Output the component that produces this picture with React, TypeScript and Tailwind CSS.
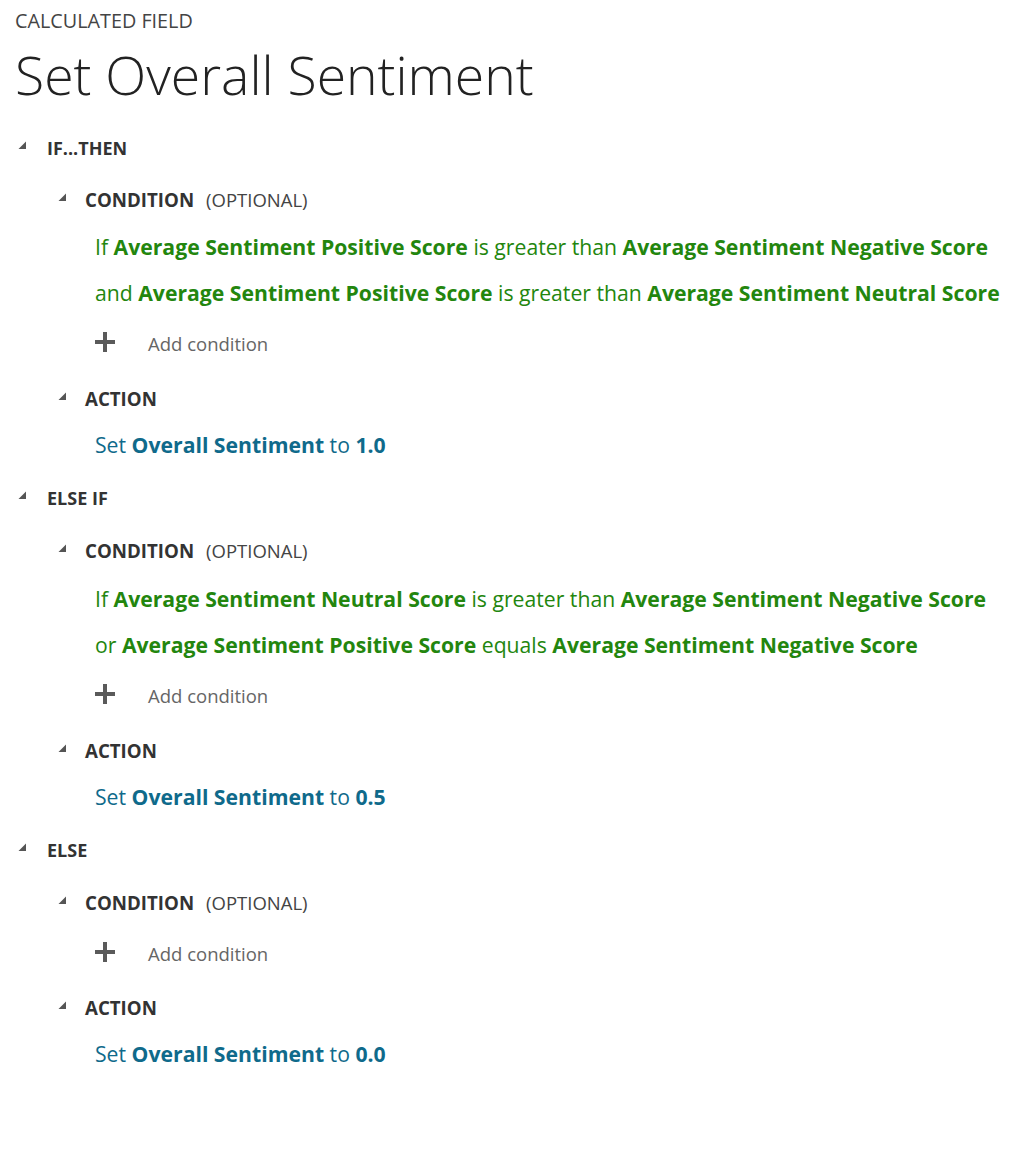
import React from "react";

const Tri = () => (
  <svg width="9" height="9" viewBox="0 0 9 9" className="shrink-0">
    <polygon points="8,0.5 8,8 0.5,8" fill="#555" />
  </svg>
);

const Plus = () => (
  <svg width="20" height="20" viewBox="0 0 20 20" className="shrink-0">
    <rect x="8" y="0" width="4" height="20" fill="#5a5a5a" />
    <rect x="0" y="8" width="20" height="4" fill="#5a5a5a" />
  </svg>
);

const G = ({ children }: { children: React.ReactNode }) => (
  <span className="font-bold">{children}</span>
);

const Header = ({ label, className = "" }: { label: string; className?: string }) => (
  <div className={`flex h-[46px] items-center ${className}`}>
    <div className="w-[47px] pl-[18px] -mt-[6px]">
      <Tri />
    </div>
    <span className="text-[18px] font-bold text-[#333]">{label}</span>
  </div>
);

const SubHeader = ({ label, optional, className = "" }: { label: string; optional?: boolean; className?: string }) => (
  <div className={`flex h-[46px] items-center pl-[40px] ${className}`}>
    <div className="w-[45px] pl-[18px] -mt-[6px]">
      <Tri />
    </div>
    <span className="text-[18.7px] font-bold text-[#333]">{label}</span>
    {optional && <span className="ml-[12px] text-[18.5px] text-[#444]">(OPTIONAL)</span>}
  </div>
);

const CondLine = ({ children, className = "" }: { children: React.ReactNode; className?: string }) => (
  <div className={`flex h-[46px] items-center pl-[95px] text-[21.2px] text-[#23860e] whitespace-nowrap ${className}`}>
    <span>{children}</span>
  </div>
);

const AddCond = ({ className = "" }: { className?: string }) => (
  <div className={`flex h-[46px] items-center pl-[95px] ${className}`}>
    <div className="-mt-[4px]">
      <Plus />
    </div>
    <span className="ml-[33px] text-[18.5px] text-[#666]">Add condition</span>
  </div>
);

const SetLine = ({ value, className = "" }: { value: string; className?: string }) => (
  <div className={`flex h-[46px] items-center pl-[95px] text-[21.2px] text-[#0f6a8b] whitespace-nowrap ${className}`}>
    <span>
      Set <G>Overall Sentiment</G> to <G>{value}</G>
    </span>
  </div>
);

export default function App() {
  return (
    <div
      className="w-[1032px] h-[1162px] bg-white overflow-hidden"
      style={{ fontFamily: '"Open Sans", "Noto Sans", sans-serif' }}
    >
      <div className="flex h-[40px] items-center pl-[15px] pt-[2px] text-[19.8px] text-[#444]">CALCULATED FIELD</div>
      <div className="flex h-[70px] items-center pl-[15px] text-[53.5px] font-light text-[#222] leading-none">
        Set Overall Sentiment
      </div>

      <Header label="IF...THEN" className="mt-[15px]" />
      <SubHeader label="CONDITION" optional className="mt-[6px]" />
      <CondLine className="mt-[1px]">
        If <G>Average Sentiment Positive Score</G> is greater than <G>Average Sentiment Negative Score</G>
      </CondLine>
      <CondLine>
        and <G>Average Sentiment Positive Score</G> is greater than <G>Average Sentiment Neutral Score</G>
      </CondLine>
      <AddCond className="mt-[5px]" />
      <SubHeader label="ACTION" className="mt-[9px]" />
      <SetLine value="1.0" />

      <Header label="ELSE IF" className="mt-[7px]" />
      <SubHeader label="CONDITION" optional className="mt-[7px]" />
      <CondLine className="mt-[2px]">
        If <G>Average Sentiment Neutral Score</G> is greater than <G>Average Sentiment Negative Score</G>
      </CondLine>
      <CondLine>
        or <G>Average Sentiment Positive Score</G> equals <G>Average Sentiment Negative Score</G>
      </CondLine>
      <AddCond className="mt-[5px]" />
      <SubHeader label="ACTION" className="mt-[9px]" />
      <SetLine value="0.5" />

      <Header label="ELSE" className="mt-[7px]" />
      <SubHeader label="CONDITION" optional className="mt-[7px]" />
      <AddCond className="mt-[5px]" />
      <SubHeader label="ACTION" className="mt-[8px]" />
      <SetLine value="0.0" />
    </div>
  );
}
